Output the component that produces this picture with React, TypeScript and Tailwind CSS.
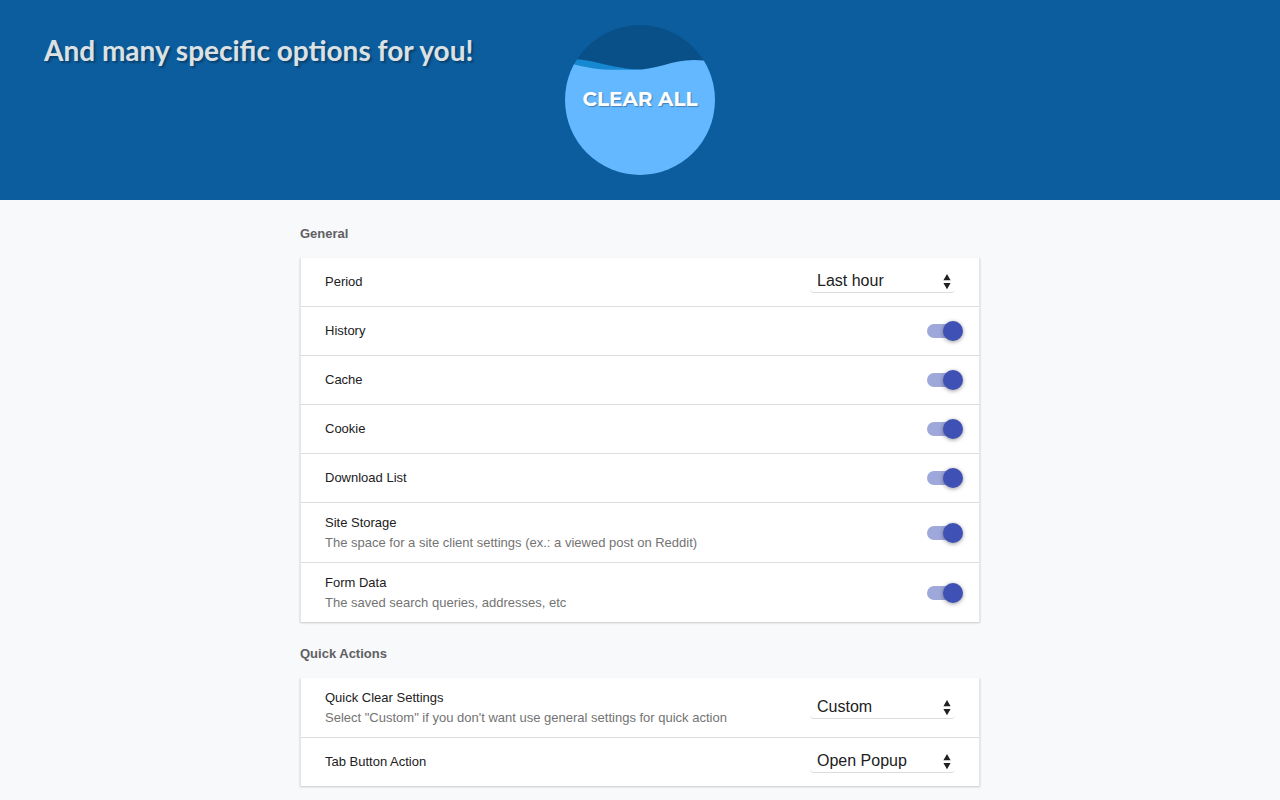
import { useState } from 'react';

type Option = {
  id: string;
  label: string;
  hint?: string;
  choices?: string[];
};

const general: Option[] = [
  { id: 'period', label: 'Period', choices: ['Last hour'] },
  { id: 'history', label: 'History' },
  { id: 'cache', label: 'Cache' },
  { id: 'cookie', label: 'Cookie' },
  { id: 'downloads', label: 'Download List' },
  { id: 'storage', label: 'Site Storage', hint: 'The space for a site client settings (ex.: a viewed post on Reddit)' },
  { id: 'forms', label: 'Form Data', hint: 'The saved search queries, addresses, etc' },
];

const quickActions: Option[] = [
  {
    id: 'quick-clear',
    label: 'Quick Clear Settings',
    hint: 'Select "Custom" if you don\'t want use general settings for quick action',
    choices: ['Custom'],
  },
  { id: 'tab-button', label: 'Tab Button Action', choices: ['Open Popup'] },
];

function Toggle({ id }: { id: string }) {
  const [on, setOn] = useState(true);

  return (
    <input
      id={id}
      type="checkbox"
      role="switch"
      checked={on}
      onChange={() => setOn(!on)}
      className="relative mr-4 h-3.5 w-9 shrink-0 cursor-pointer appearance-none before:absolute before:inset-y-0 before:left-0 before:w-[34px] before:rounded-full before:bg-black/25 checked:before:bg-[#9fa8da] after:absolute after:-top-[3px] after:left-0 after:size-5 after:rounded-full after:bg-[#fafafa] after:shadow-[0_1px_4px_rgba(0,0,0,0.4)] after:transition-transform checked:after:translate-x-4 checked:after:bg-[#3f51b5]"
    />
  );
}

function Dropdown({ id, choices }: { id: string; choices: string[] }) {
  return (
    <div className="relative mr-6 w-[145px] shrink-0">
      <select
        id={id}
        className="block h-[22px] w-full appearance-none rounded border-b border-[#dcdcdc] bg-white pr-6 pb-0.5 pl-[7px] text-base leading-5 text-[#212121]"
      >
        {choices.map((choice) => (
          <option key={choice}>{choice}</option>
        ))}
      </select>
      <svg viewBox="0 0 8 16" className="pointer-events-none absolute top-[3px] right-1 h-4 w-2" fill="#212121">
        <path d="M4 0 7.6 6.2H0.4ZM0.4 9H7.6L4 15.2Z" />
      </svg>
    </div>
  );
}

function Row({ option }: { option: Option }) {
  return (
    <div className={`box-content flex items-center justify-between gap-4 pl-6 ${option.hint ? 'min-h-[59px]' : 'min-h-12'}`}>
      <label htmlFor={option.id} className="text-[13px] leading-5 text-[#212121]">
        {option.label}
        {option.hint && <span className="block text-[#737373]">{option.hint}</span>}
      </label>
      {option.choices ? <Dropdown id={option.id} choices={option.choices} /> : <Toggle id={option.id} />}
    </div>
  );
}

function Section({ title, options }: { title: string; options: Option[] }) {
  return (
    <section>
      <h2 className="mb-3.5 text-[13px] leading-5 font-bold text-[#5f6062]">{title}</h2>
      <div className="divide-y divide-[#dcdddd] border-x border-[#e4e5e6] bg-white shadow-[0_1px_2px_rgba(0,0,0,0.2)]">
        {options.map((option) => (
          <Row key={option.id} option={option} />
        ))}
      </div>
    </section>
  );
}

export default function App() {
  return (
    <div className="min-h-screen bg-[#f8f9fb] font-['Liberation_Sans',Arial,sans-serif]">
      <header className="grid h-[200px] grid-cols-[minmax(0,1fr)_auto_minmax(0,1fr)] bg-[#0c5d9e] py-[25px]">
        <h1 className="pl-11 font-['Lato',sans-serif] text-[28px] leading-[50px] font-bold whitespace-nowrap text-[#dce1e4] [text-shadow:2px_2px_2px_rgba(0,0,0,0.3)]">
          And many specific options for you!
        </h1>
        <button type="button" className="relative size-[150px] cursor-pointer overflow-hidden rounded-full">
          <svg viewBox="0 0 150 150" className="absolute inset-0 size-full">
            <rect width="150" height="150" fill="#0a5088" />
            <path d="M0 33.5C28 33.5 42 43 78 45L70 60H0Z" fill="#1688d2" />
            <path d="M0 37C16 41 28 44.7 45 44.7H68C95 45 110 32 139 35.5L150 37V150H0Z" fill="#63b8ff" />
          </svg>
          <span className="relative font-['Montserrat','Lato',sans-serif] text-[20px] leading-6 font-bold whitespace-nowrap text-white [text-shadow:1px_1px_1px_rgba(0,0,0,0.3)]">
            CLEAR ALL
          </span>
        </button>
      </header>

      <main className="mx-auto flex max-w-[680px] flex-col gap-[22px] pt-6 pb-3.5">
        <Section title="General" options={general} />
        <Section title="Quick Actions" options={quickActions} />
      </main>
    </div>
  );
}
